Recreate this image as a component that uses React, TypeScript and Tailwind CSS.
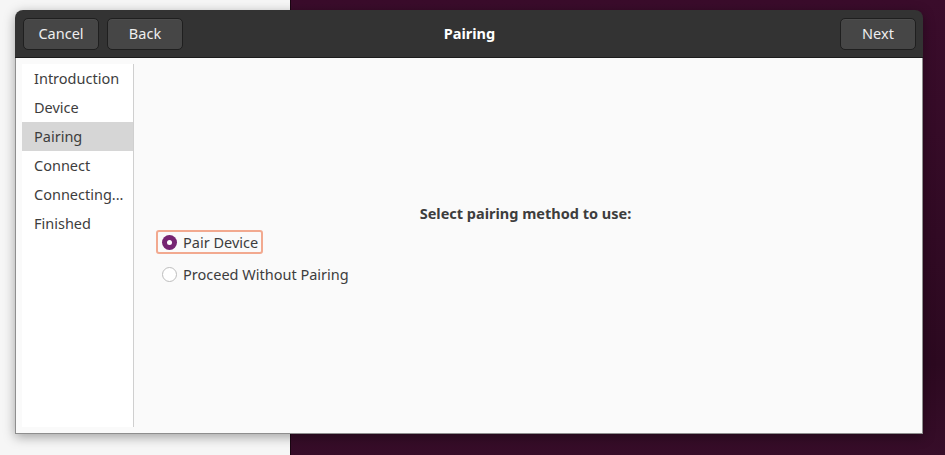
import React, { useState } from 'react';

const STEPS = ['Introduction', 'Device', 'Pairing', 'Connect', 'Connecting...', 'Finished'];

const HeaderButton: React.FC<{ label: string }> = ({ label }) => (
  <button className="h-[32px] w-[76px] rounded-[5px] border border-[#1f1f1f] bg-[#464646] text-[14.5px] text-[#eeeeee] shadow-[inset_0_1px_0_rgba(255,255,255,0.04)]">
    {label}
  </button>
);

const Radio: React.FC<{ checked: boolean }> = ({ checked }) =>
  checked ? (
    <span className="flex h-[15px] w-[15px] shrink-0 items-center justify-center rounded-full bg-[#762572]">
      <span className="h-[5px] w-[5px] rounded-full bg-white" />
    </span>
  ) : (
    <span className="h-[15px] w-[15px] shrink-0 rounded-full border border-[#bdbdbd] bg-white" />
  );

export default function App() {
  const [method, setMethod] = useState(0);
  const options = ['Pair Device', 'Proceed Without Pairing'];

  return (
    <div
      className="relative h-[455px] w-[945px] overflow-hidden text-[#3d3d3d]"
      style={{ fontFamily: '"Noto Sans", "Open Sans", sans-serif' }}
    >
      {/* desktop behind the window */}
      <div className="absolute inset-0 flex">
        <div className="w-[290px] bg-[#f6f6f6]" />
        <div className="w-px bg-[#1a0612]" />
        <div className="flex-1 bg-[linear-gradient(to_bottom,#3a0c2b,#2c0920_80%,#370d29)]" />
      </div>

      <div className="relative ml-[15px] mt-[10px] flex h-[424px] w-[908px] flex-col overflow-hidden rounded-t-[8px] shadow-[0_3px_12px_rgba(0,0,0,0.35)]">
        <div className="grid h-[48px] shrink-0 grid-cols-[1fr_auto_1fr] items-center border-b border-[#1c1c1c] bg-[#333333] pl-[8px] pr-[7px]">
          <div className="flex gap-[8px]">
            <HeaderButton label="Cancel" />
            <HeaderButton label="Back" />
          </div>
          <div className="text-[14.5px] font-bold text-white">Pairing</div>
          <div className="flex justify-end">
            <HeaderButton label="Next" />
          </div>
        </div>

        <div className="flex flex-1 border-x border-b border-[#8e8e8e] bg-[#fafafa]">
          <div className="my-[6px] ml-[6px] w-[112px] border-r border-[#cfcfcf] bg-white">
            {STEPS.map((s, i) => (
              <div
                key={s}
                className={`flex h-[29px] items-center pl-[12px] text-[14.5px] ${i === 2 ? 'bg-[#d6d6d6]' : ''}`}
              >
                {s}
              </div>
            ))}
          </div>

          <div className="flex flex-1 flex-col justify-center pb-[2px] pl-[22px] pr-[27px]">
            <div className="mb-[6px] text-center text-[14.5px] font-bold">Select pairing method to use:</div>
            <div className="flex flex-col gap-[8px]">
              {options.map((o, i) => (
                <button
                  key={o}
                  onClick={() => setMethod(i)}
                  className={`flex h-[24px] w-fit items-center gap-[6px] rounded-[3px] border-2 pl-[4px] pr-[3px] text-[14.5px] ${
                    i === 0 ? 'border-[#f2a98f]' : 'border-transparent'
                  }`}
                >
                  <Radio checked={method === i} />
                  <span>{o}</span>
                </button>
              ))}
            </div>
          </div>
        </div>
      </div>
    </div>
  );
}
